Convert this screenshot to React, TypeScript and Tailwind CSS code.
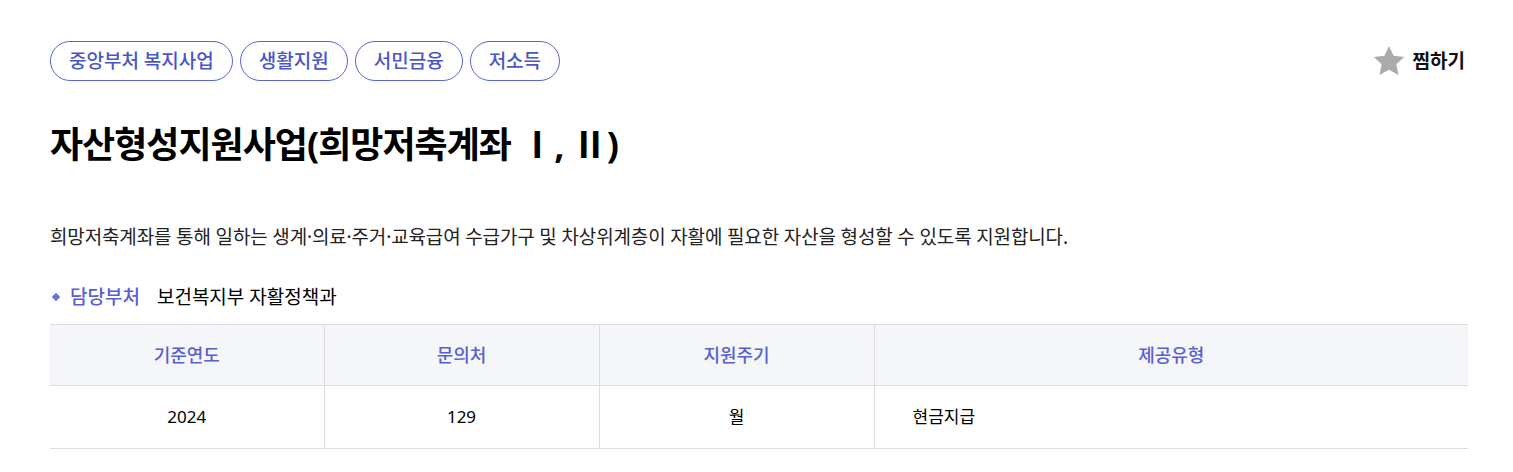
const tags = ["중앙부처 복지사업", "생활지원", "서민금융", "저소득"]

const cols = [
  { head: "기준연도", value: "2024", align: "center" },
  { head: "문의처", value: "129", align: "center" },
  { head: "지원주기", value: "월", align: "center" },
  { head: "제공유형", value: "현금지급", align: "left" },
]

export default function App() {
  return (
    <div className="min-h-screen bg-white pl-[50px] pr-[45px] pt-[41px] text-[#111] [font-family:'Noto_Sans','Noto_Sans_CJK_KR',sans-serif]">
      {/* Tags + bookmark */}
      <div className="flex h-10 items-center justify-between">
        <div className="flex gap-[7px]">
          {tags.map((tag) => (
            <span
              key={tag}
              className="flex h-10 items-center rounded-full border border-[#5865d6] px-[18px] text-[19px] font-medium text-[#4a56c8]"
            >
              {tag}
            </span>
          ))}
        </div>
        <button className="mr-[3px] flex items-center gap-[7px] text-[19px] font-bold text-[#111]">
          <svg width="34" height="32" viewBox="0 0 24 23" className="text-[#ababab]">
            <path
              fill="currentColor"
              d="M12 0.8l3.3 7 7.6 0.9-5.6 5.2 1.5 7.6L12 17.7l-6.8 3.8 1.5-7.6L1.1 8.7l7.6-0.9z"
            />
          </svg>
          찜하기
        </button>
      </div>

      {/* Title */}
      <h1 className="mt-[40px] text-[36px] font-bold leading-[48px] tracking-[-1px] text-black">
        자산형성지원사업(희망저축계좌 Ⅰ, Ⅱ)
      </h1>

      {/* Description */}
      <p className="mt-[54px] text-[19px] leading-[28px] tracking-[-0.15px] text-[#222]">
        희망저축계좌를 통해 일하는 생계·의료·주거·교육급여 수급가구 및 차상위계층이 자활에 필요한 자산을 형성할 수 있도록 지원합니다.
      </p>

      {/* Department */}
      <div className="mt-[32px] flex items-center text-[19px] leading-[28px]">
        <span className="ml-[3px] mr-[11px] h-[6px] w-[6px] rotate-45 bg-[#6b72d8]" />
        <span className="font-medium text-[#5a5fd0]">담당부처</span>
        <span className="ml-[17px] text-black">보건복지부 자활정책과</span>
      </div>

      {/* Info table */}
      <table className="mt-[13px] w-full table-fixed border-collapse">
        <colgroup>
          <col className="w-[274px]" />
          <col className="w-[275px]" />
          <col className="w-[275px]" />
          <col />
        </colgroup>
        <thead>
          <tr className="h-[61px] border-y border-[#dddddd] bg-[#f5f6fa]">
            {cols.map((c, i) => (
              <th
                key={c.head}
                className={`text-[18px] font-medium text-[#5a5fd0] ${i > 0 ? "border-l border-[#dddddd]" : ""}`}
              >
                {c.head}
              </th>
            ))}
          </tr>
        </thead>
        <tbody>
          <tr className="h-[63px] border-b border-[#dddddd]">
            {cols.map((c, i) => (
              <td
                key={c.head}
                className={`text-[17px] text-black ${i > 0 ? "border-l border-[#dddddd]" : ""} ${
                  c.align === "left" ? "pl-[38px] text-left" : "text-center"
                }`}
              >
                {c.value}
              </td>
            ))}
          </tr>
        </tbody>
      </table>
    </div>
  )
}
